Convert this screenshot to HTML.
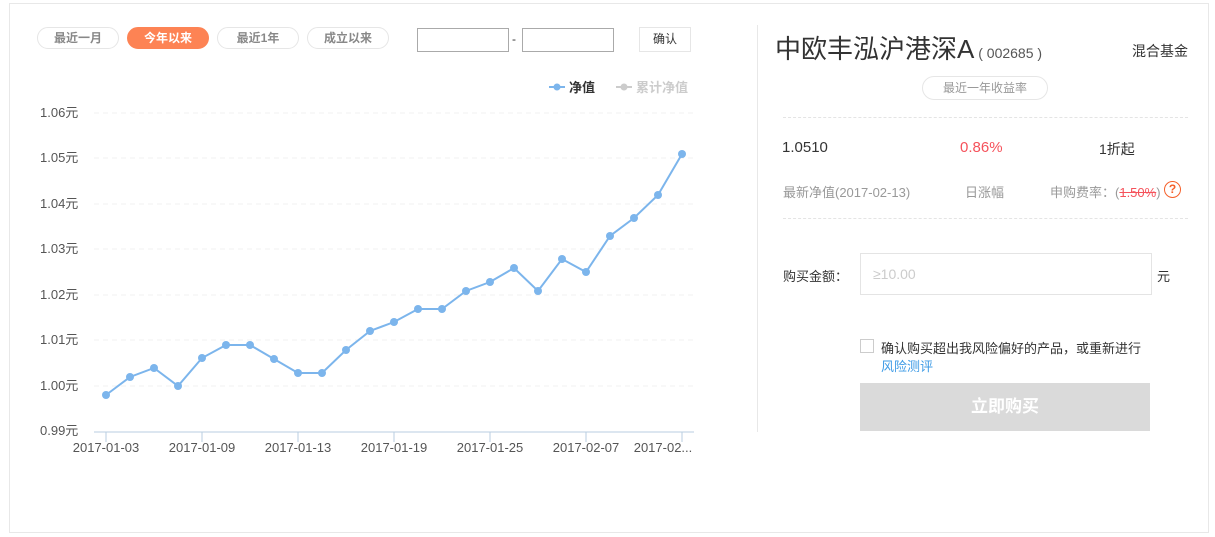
<!DOCTYPE html>
<html><head><meta charset="utf-8"><style>
*{margin:0;padding:0;box-sizing:border-box}
body{width:1215px;height:537px;background:#fff;font-family:"Liberation Sans","Noto Sans CJK SC",sans-serif;position:relative;overflow:hidden;color:#333}
.a{position:absolute;white-space:nowrap}
.box{position:absolute;left:9px;top:3px;width:1200px;height:530px;border:1px solid #e8e8e8}
.btn{position:absolute;top:27px;width:82px;height:22px;border:1px solid #e6e6e6;border-radius:11px;font-size:12px;line-height:20px;text-align:center;color:#888;font-weight:bold}
.btn.on{background:#fd8354;border-color:#fd8354;color:#fff}
.inp{position:absolute;top:28px;width:92px;height:24px;border:1px solid #aaa}
.dash{position:absolute;left:783px;width:405px;border-top:1px dashed #e4e4e4}
</style></head><body>
<div class="box"></div>
<div class="btn" style="left:37px">最近一月</div>
<div class="btn on" style="left:127px">今年以来</div>
<div class="btn" style="left:217px">最近1年</div>
<div class="btn" style="left:307px">成立以来</div>
<div class="inp" style="left:417px"></div>
<div class="a" style="left:512px;top:32px;font-size:12px">-</div>
<div class="inp" style="left:522px"></div>
<div class="a" style="left:639px;top:27px;width:52px;height:25px;border:1px solid #e6e6e6;font-size:12px;line-height:23px;text-align:center">确认</div>
<svg class="a" style="left:0;top:0" width="757" height="537">
<g font-size="13" font-weight="bold">
<line x1="549" y1="87" x2="565" y2="87" stroke="#7cb5ec" stroke-width="2"/><circle cx="557" cy="87" r="3.5" fill="#7cb5ec"/>
<text x="569" y="92" fill="#333">净值</text>
<line x1="616" y1="87" x2="632" y2="87" stroke="#ccc" stroke-width="2"/><circle cx="624" cy="87" r="3.5" fill="#ccc"/>
<text x="636" y="92" fill="#ccc">累计净值</text>
</g>
<g stroke="#f0f0f0" stroke-dasharray="5,4">
<line x1="94" y1="113" x2="694" y2="113"/><line x1="94" y1="158" x2="694" y2="158"/><line x1="94" y1="204" x2="694" y2="204"/><line x1="94" y1="249" x2="694" y2="249"/><line x1="94" y1="295" x2="694" y2="295"/><line x1="94" y1="340" x2="694" y2="340"/><line x1="94" y1="386" x2="694" y2="386"/>
</g>
<g font-size="13" fill="#555">
<text x="40" y="117">1.06元</text><text x="40" y="162">1.05元</text><text x="40" y="208">1.04元</text><text x="40" y="253">1.03元</text><text x="40" y="299">1.02元</text><text x="40" y="344">1.01元</text><text x="40" y="390">1.00元</text><text x="40" y="435">0.99元</text>
</g>
<line x1="94" y1="432" x2="694" y2="432" stroke="#b8cde0"/>
<g stroke="#b8cde0"><line x1="106" y1="432" x2="106" y2="442"/><line x1="202" y1="432" x2="202" y2="442"/><line x1="298" y1="432" x2="298" y2="442"/><line x1="394" y1="432" x2="394" y2="442"/><line x1="490" y1="432" x2="490" y2="442"/><line x1="586" y1="432" x2="586" y2="442"/><line x1="682" y1="432" x2="682" y2="442"/></g>
<g font-size="13" fill="#555" text-anchor="middle">
<text x="106" y="452">2017-01-03</text><text x="202" y="452">2017-01-09</text><text x="298" y="452">2017-01-13</text><text x="394" y="452">2017-01-19</text><text x="490" y="452">2017-01-25</text><text x="586" y="452">2017-02-07</text><text x="663" y="452">2017-02...</text>
</g>
<polyline fill="none" stroke="#7cb5ec" stroke-width="2" points="106,395 130,377 154,368 178,386 202,358 226,345 250,345 274,359 298,373 322,373 346,350 370,331 394,322 418,309 442,309 466,291 490,282 514,268 538,291 562,259 586,272 610,236 634,218 658,195 682,154"/>
<g fill="#7cb5ec">
<circle cx="106" cy="395" r="4"/><circle cx="130" cy="377" r="4"/><circle cx="154" cy="368" r="4"/><circle cx="178" cy="386" r="4"/><circle cx="202" cy="358" r="4"/><circle cx="226" cy="345" r="4"/><circle cx="250" cy="345" r="4"/><circle cx="274" cy="359" r="4"/><circle cx="298" cy="373" r="4"/><circle cx="322" cy="373" r="4"/><circle cx="346" cy="350" r="4"/><circle cx="370" cy="331" r="4"/><circle cx="394" cy="322" r="4"/><circle cx="418" cy="309" r="4"/><circle cx="442" cy="309" r="4"/><circle cx="466" cy="291" r="4"/><circle cx="490" cy="282" r="4"/><circle cx="514" cy="268" r="4"/><circle cx="538" cy="291" r="4"/><circle cx="562" cy="259" r="4"/><circle cx="586" cy="272" r="4"/><circle cx="610" cy="236" r="4"/><circle cx="634" cy="218" r="4"/><circle cx="658" cy="195" r="4"/><circle cx="682" cy="154" r="4"/>
</g>
</svg>
<div class="a" style="left:757px;top:25px;height:407px;border-left:1px solid #e8e8e8"></div>
<div class="a" style="left:775px;top:29px;font-size:26px;color:#333">中欧丰泓沪港深A<span style="font-size:14px;color:#555"> ( 002685 )</span></div>
<div class="a" style="left:1132px;top:41px;font-size:14px">混合基金</div>
<div class="a" style="left:922px;top:76px;width:126px;height:24px;border:1px solid #e6e6e6;border-radius:12px;font-size:12px;color:#999;text-align:center;line-height:22px">最近一年收益率</div>
<div class="dash" style="top:117px"></div>
<div class="a" style="left:782px;top:139px;font-size:15px">1.0510</div>
<div class="a" style="left:960px;top:139px;font-size:15px;color:#f5525b">0.86%</div>
<div class="a" style="left:1099px;top:139px;font-size:14px">1折起</div>
<div class="a" style="left:783px;top:182px;font-size:13px;color:#999">最新净值(2017-02-13)</div>
<div class="a" style="left:965px;top:182px;font-size:13px;color:#999">日涨幅</div>
<div class="a" style="left:1050px;top:182px;font-size:13px;color:#999">申购费率：(<span style="color:#f5525b;text-decoration:line-through">1.50%</span>)</div>
<div class="a" style="left:1164px;top:181px;width:17px;height:17px;border:1.5px solid #f5602a;border-radius:50%;color:#f5602a;font-size:12px;text-align:center;line-height:14px;font-weight:bold">?</div>
<div class="dash" style="top:218px"></div>
<div class="a" style="left:783px;top:266px;font-size:13px">购买金额：</div>
<div class="a" style="left:860px;top:253px;width:292px;height:42px;border:1px solid #e4e4e4;font-size:14px;color:#ccc;line-height:40px;padding-left:12px">≥10.00</div>
<div class="a" style="left:1157px;top:266px;font-size:13px">元</div>
<div class="a" style="left:860px;top:339px;width:14px;height:14px;border:1px solid #ccc"></div>
<div class="a" style="left:881px;top:338px;font-size:13px">确认购买超出我风险偏好的产品，或重新进行</div>
<div class="a" style="left:881px;top:356px;font-size:13px;color:#3e9be6">风险测评</div>
<div class="a" style="left:860px;top:383px;width:290px;height:48px;background:#dadada;color:#fff;font-size:17px;font-weight:bold;text-align:center;line-height:48px">立即购买</div>
</body></html>
